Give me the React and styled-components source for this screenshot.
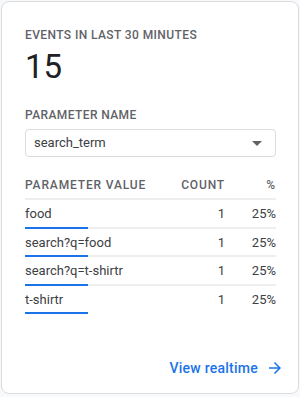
import React from "react";
import styled, { createGlobalStyle } from "styled-components";

const rows = [
  { value: "food", count: 1, share: 25 },
  { value: "search?q=food", count: 1, share: 25 },
  { value: "search?q=t-shirtr", count: 1, share: 25 },
  { value: "t-shirtr", count: 1, share: 25 },
];

export default function App() {
  return (
    <Page>
      <GlobalStyle />
      <Card>
        <Title>Events in last 30 minutes</Title>
        <BigNumber>15</BigNumber>
        <Label>Parameter name</Label>
        <Select>
          <span>search_term</span>
          <Caret />
        </Select>
        <Table>
          <HeadRow>
            <HeadCell>Parameter value</HeadCell>
            <HeadCell right>Count</HeadCell>
            <HeadCell right>%</HeadCell>
          </HeadRow>
          {rows.map((row, i) => (
            <Row key={row.value}>
              <Cell>{row.value}</Cell>
              <Cell right>{row.count}</Cell>
              <Cell right>{row.share}%</Cell>
              <Track last={i === rows.length - 1}>
                <Fill style={{ width: `${row.share}%` }} />
              </Track>
            </Row>
          ))}
        </Table>
        <Footer>
          <LinkButton>
            View realtime
            <svg width="18" height="18" viewBox="0 0 24 24" fill="currentColor">
              <path d="M12 4l-1.41 1.41L16.17 11H4v2h12.17l-5.58 5.59L12 20l8-8z" />
            </svg>
          </LinkButton>
        </Footer>
      </Card>
    </Page>
  );
}

const GlobalStyle = createGlobalStyle`
  body {
    margin: 0;
    background: #f8f9fa;
    font-family: Roboto, "Liberation Sans", sans-serif;
  }
`;

const Page = styled.div`
  padding: 1px;
`;

const Card = styled.div`
  box-sizing: border-box;
  width: 298px;
  height: 393px;
  background: #ffffff;
  border: 1px solid #dadce0;
  border-radius: 8px;
  padding: 25px 22px 0 23px;
  display: flex;
  flex-direction: column;
`;

const Title = styled.div`
  font-size: 12px;
  line-height: 16px;
  font-weight: 500;
  letter-spacing: 0.4px;
  text-transform: uppercase;
  color: #5f6368;
`;

const BigNumber = styled.div`
  margin-top: 4px;
  font-size: 33px;
  line-height: 40px;
  color: #202124;
`;

const Label = styled(Title)`
  margin-top: 20px;
`;

const Select = styled.div`
  box-sizing: border-box;
  margin-top: 6px;
  height: 28px;
  border: 1px solid #dadce0;
  border-radius: 4px;
  padding: 0 13px 2px 8px;
  display: flex;
  align-items: center;
  justify-content: space-between;
  font-size: 13px;
  color: #3c4043;
`;

const Caret = styled.span`
  width: 0;
  height: 0;
  border-left: 5px solid transparent;
  border-right: 5px solid transparent;
  border-top: 5px solid #5f6368;
  margin-top: 2px;
`;

const Table = styled.div`
  margin-top: 20px;
`;

const HeadRow = styled.div`
  display: grid;
  grid-template-columns: 1fr 60px 51px;
  padding-bottom: 5px;
  border-bottom: 2px solid #eeeeee;
`;

const HeadCell = styled.div`
  font-size: 12px;
  line-height: 16px;
  font-weight: 500;
  letter-spacing: 0.85px;
  text-transform: uppercase;
  color: #5f6368;
  text-align: ${(p) => (p.right ? "right" : "left")};
`;

const Row = styled.div`
  display: grid;
  grid-template-columns: 1fr 60px 51px;
  padding-top: 6px;
`;

const Cell = styled.div`
  font-size: 13px;
  line-height: 16px;
  color: #3c4043;
  padding-bottom: 4.5px;
  text-align: ${(p) => (p.right ? "right" : "left")};
`;

const Track = styled.div`
  grid-column: 1 / -1;
  height: 2px;
  background: ${(p) => (p.last ? "transparent" : "#eeeeee")};
`;

const Fill = styled.div`
  height: 100%;
  background: #1a73e8;
`;

const Footer = styled.div`
  margin-top: auto;
  margin-right: -8px;
  padding-bottom: 15px;
  display: flex;
  justify-content: flex-end;
`;

const LinkButton = styled.div`
  display: flex;
  align-items: center;
  gap: 8px;
  font-size: 14px;
  line-height: 20px;
  font-weight: 500;
  letter-spacing: 0.25px;
  color: #1a73e8;
`;
